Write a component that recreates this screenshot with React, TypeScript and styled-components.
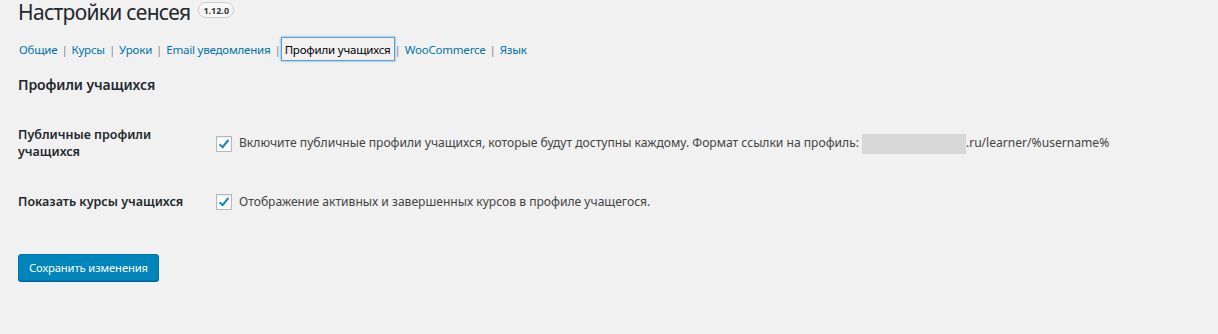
import React from "react";
import styled, { createGlobalStyle } from "styled-components";

const Global = createGlobalStyle`
  html, body { margin: 0; padding: 0; background: #f1f1f1; }
  body { font-family: "Segoe UI", "Noto Sans", "Open Sans", sans-serif; color: #23282d; }
`;

const Wrap = styled.div`
  padding: 0 18px;
  width: 1218px;
  height: 334px;
  box-sizing: border-box;
  overflow: hidden;
`;

const TitleRow = styled.div`
  display: flex;
  align-items: center;
  gap: 8px;
  height: 24px;
`;

const Title = styled.h1`
  margin: 0;
  font-size: 21px;
  font-weight: 400;
  line-height: 24px;
  color: #23282d;
  letter-spacing: -0.7px;
`;

const Badge = styled.span`
  display: inline-flex;
  align-items: center;
  height: 14px;
  padding: 0 4px;
  border: 1px solid #cfcfcf;
  border-radius: 8px;
  background: #f7f7f7;
  font-size: 9px;
  font-weight: 700;
  color: #32373c;
  margin-top: -4px;
`;

const Tabs = styled.nav`
  display: flex;
  align-items: center;
  margin-top: 13px;
  height: 24px;
  font-size: 11.5px;
  letter-spacing: -0.2px;
  padding-left: 1px;
`;

const Tab = styled.a<{ $active?: boolean }>`
  color: ${(p) => (p.$active ? "#000" : "#0073aa")};
  text-decoration: none;
  padding: ${(p) => (p.$active ? "0 3px" : "0")};
  margin: ${(p) => (p.$active ? "0 -4px" : "0")};
  height: ${(p) => (p.$active ? "22px" : "auto")};
  display: inline-flex;
  align-items: center;
  border: ${(p) => (p.$active ? "1px solid #5b9dd9" : "none")};
  box-shadow: ${(p) => (p.$active ? "0 0 2px rgba(30,140,190,0.8)" : "none")};
`;

const Sep = styled.span`
  color: #888;
  margin: 0 4px;
`;

const SectionTitle = styled.h2`
  margin: 14px 0 0;
  font-size: 14px;
  font-weight: 600;
  line-height: 20px;
  color: #23282d;
  letter-spacing: -0.1px;
`;

const Table = styled.div`
  display: grid;
  grid-template-columns: 198px 1fr;
  margin-top: 31px;
  row-gap: 33px;
`;

const Label = styled.div`
  font-size: 12.5px;
  font-weight: 600;
  line-height: 17px;
  color: #23282d;
  width: 180px;
`;

const Field = styled.label<{ $offset?: number }>`
  display: flex;
  align-items: center;
  gap: 7px;
  font-size: 12.1px;
  color: #444;
  height: 17px;
  margin-top: ${(p) => p.$offset ?? 0}px;
`;

const Box = styled.span`
  width: 14px;
  height: 14px;
  border: 1px solid #b4b9be;
  background: #fff;
  box-shadow: inset 0 1px 2px rgba(0,0,0,0.1);
  display: inline-flex;
  align-items: center;
  justify-content: center;
  flex: none;
`;

const Blur = styled.span`
  display: inline-block;
  width: 104px;
  height: 20px;
  background: #d8d8d8;
  vertical-align: middle;
  margin: 0 0 0 3px;
`;

const Button = styled.button`
  margin-top: 44px;
  height: 27px;
  padding: 0 10px;
  background: #0085ba;
  border: 1px solid #0073aa;
  border-radius: 3px;
  box-shadow: 0 1px 0 #006799;
  color: #fff;
  font-family: inherit;
  font-size: 11.2px;
  letter-spacing: -0.1px;
  cursor: pointer;
`;

const Check = () => (
  <svg width="14" height="14" viewBox="0 0 14 14">
    <path d="M2.6 7.2 L5.6 10.2 L11.4 3" fill="none" stroke="#1e8cbe" strokeWidth="2.2" />
  </svg>
);

export default function App() {
  const tabs = ["Общие", "Курсы", "Уроки", "Email уведомления", "Профили учащихся", "WooCommerce", "Язык"];
  return (
    <>
      <Global />
      <Wrap>
        <TitleRow>
          <Title>Настройки сенсея</Title>
          <Badge>1.12.0</Badge>
        </TitleRow>
        <Tabs>
          {tabs.map((t, i) => (
            <React.Fragment key={t}>
              {i > 0 && <Sep>|</Sep>}
              <Tab $active={t === "Профили учащихся"} href="#">{t}</Tab>
            </React.Fragment>
          ))}
        </Tabs>
        <SectionTitle>Профили учащихся</SectionTitle>
        <Table>
          <Label>Публичные профили учащихся</Label>
          <Field $offset={9}>
            <Box><Check /></Box>
            <span>
              Включите публичные профили учащихся, которые будут доступны каждому. Формат ссылки на профиль:
              <Blur />
              .ru/learner/%username%
            </span>
          </Field>
          <Label>Показать курсы учащихся</Label>
          <Field>
            <Box><Check /></Box>
            <span>Отображение активных и завершенных курсов в профиле учащегося.</span>
          </Field>
        </Table>
        <Button>Сохранить изменения</Button>
      </Wrap>
    </>
  );
}
